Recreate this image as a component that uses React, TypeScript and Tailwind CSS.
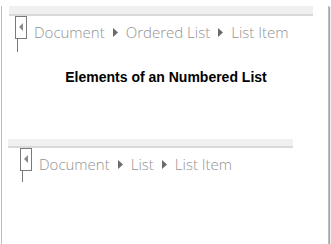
import { Fragment } from "react";

type Crumbs = { items: string[] };

function Caret({ className }: { className?: string }) {
  return (
    <svg width="5" height="9" viewBox="0 0 5 9" className={className}>
      <path d="M0 0 L5 4.5 L0 9 Z" fill="#6b6b6b" />
    </svg>
  );
}

function Breadcrumb({ items }: Crumbs) {
  return (
    <div className="flex items-center font-['Open_Sans',sans-serif] text-[15px] font-light text-[#939393]">
      {items.map((item, i) => (
        <Fragment key={item}>
          {i > 0 ? <Caret className="mx-[8px] mt-[1px]" /> : null}
          <span>{item}</span>
        </Fragment>
      ))}
    </div>
  );
}

function Handle({ tall }: { tall: number }) {
  return (
    <div className="flex flex-col items-start">
      <div className="flex h-[23px] w-[12px] items-start justify-center border border-[#7a7a7a] pt-[6px]">
        <svg width="4" height="8" viewBox="0 0 4 8">
          <path d="M4 0 L0 4 L4 8 Z" fill="#8a8a8a" />
        </svg>
      </div>
      <div className="ml-[2px] w-px bg-[#7a7a7a]" style={{ height: tall }} />
    </div>
  );
}

export default function App() {
  return (
    <div className="h-[244px] w-[331px] bg-white">
      <div className="ml-px h-[241px] w-[328px] border-r border-b border-l border-[#bdbdbd] bg-white shadow-[1px_1px_1px_rgba(0,0,0,0.35)]">
        <div className="ml-[7px] mt-[6px] w-[304px]">
          <div className="h-[10px] border-b-2 border-[#d9d9d9] bg-[#f0f0f0]" />
          <div className="ml-[6px] flex items-start gap-[7px]">
            <Handle tall={13} />
            <div className="mt-[5px]">
              <Breadcrumb items={["Document", "Ordered List", "List Item"]} />
            </div>
          </div>
        </div>

        <p className="mt-[15px] pl-[2px] text-center font-['Liberation_Sans',sans-serif] text-[14px] font-bold text-black">
          Elements of an Numbered List
        </p>

        <div className="ml-[6px] mt-[51px] w-[285px]">
          <div className="h-[9px] border-b-2 border-[#d9d9d9] bg-[#f0f0f0]" />
          <div className="ml-[12px] flex items-start gap-[7px]">
            <Handle tall={11} />
            <div className="mt-[5px]">
              <Breadcrumb items={["Document", "List", "List Item"]} />
            </div>
          </div>
        </div>
      </div>
    </div>
  );
}
